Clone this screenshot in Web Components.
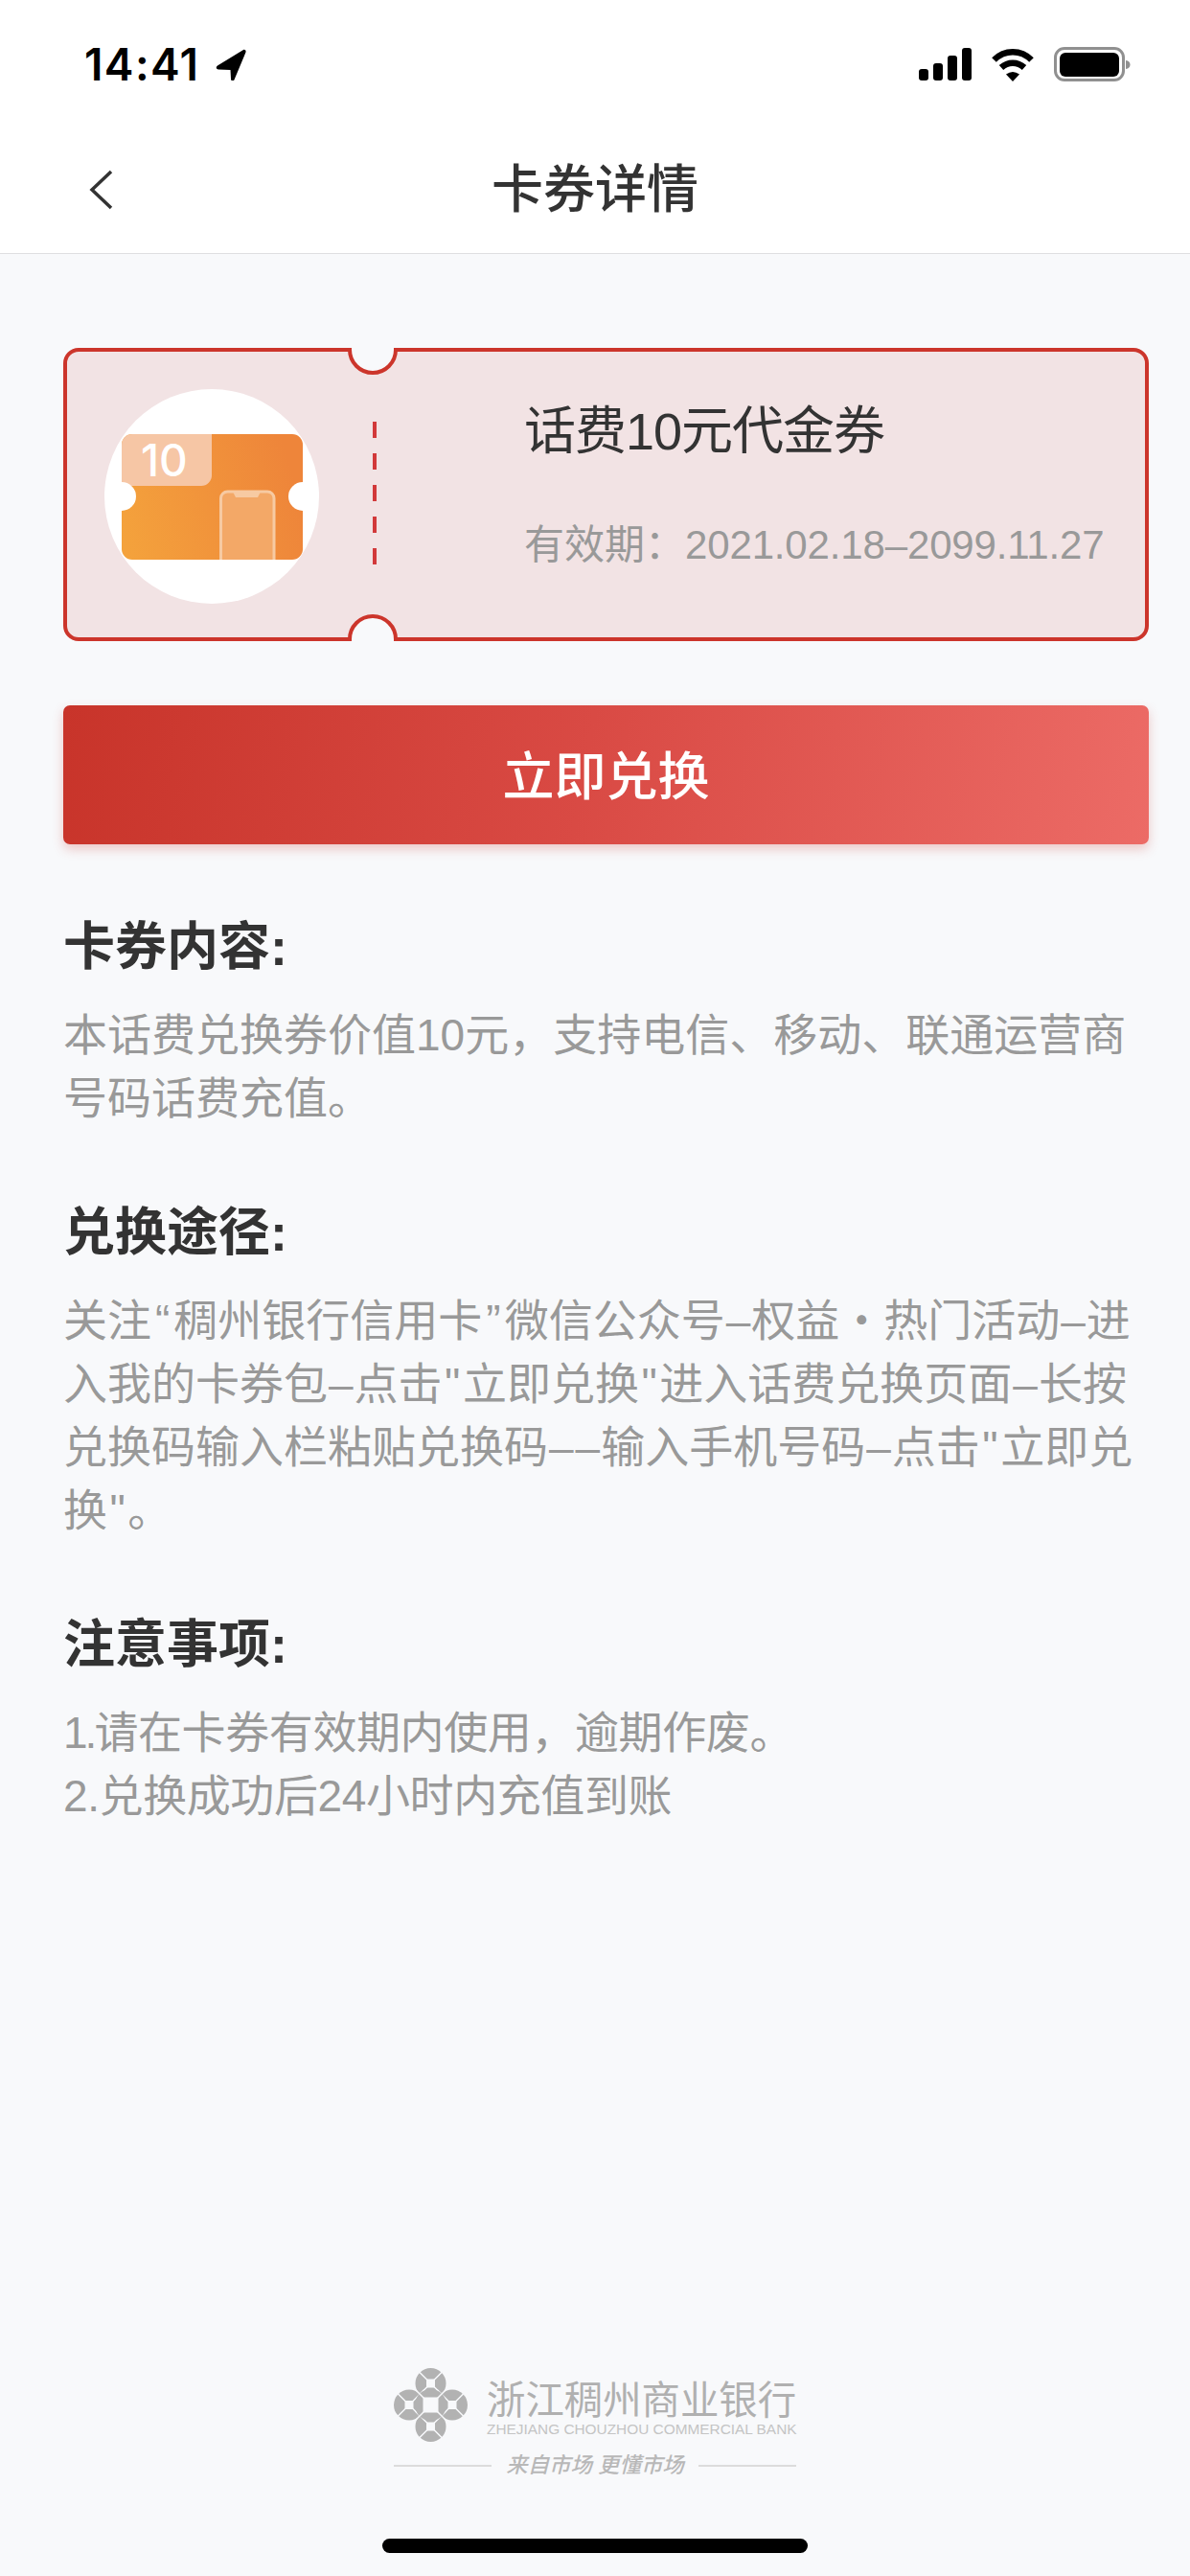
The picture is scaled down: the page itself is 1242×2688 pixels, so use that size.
<!DOCTYPE html>
<html lang="zh-CN">
<head>
<meta charset="utf-8">
<title>卡券详情</title>
<style>
    html, body {
        margin: 0;
        padding: 0;
    }
    body {
        width: 1242px;
        height: 2688px;
        display: flex;
        flex-direction: column;
        background-color: #f8f9fb;
        font-family: "Liberation Sans", "Noto Sans CJK SC", sans-serif;
        overflow: hidden;
    }
    /* punctuation in the copy sits wider than the fallback glyphs */
    .q { padding: 0 4px; }
    .s { padding: 0 2.5px; }
    .d { padding: 0 1px; }
    .n { letter-spacing: -3px; }
    .tight { letter-spacing: -0.4px; }
</style>
</head>
<body>
<status-bar time="14:41"></status-bar>
<nav-header>卡券详情</nav-header>
<coupon-ticket title-text="话费10元代金券" label="有效期：" period="2021.02.18–2099.11.27"></coupon-ticket>
<action-button>立即兑换</action-button>
<info-section heading="卡券内容:">本话费兑换券价值10元，支持电信、移动、联通运营商号码话费充值。</info-section>
<info-section heading="兑换途径:">关注<span class="q">“</span>稠州银行信用卡<span class="q">”</span>微信公众号<span class="d">–</span>权益・热门活动<span class="d">–</span>进<br>入我的卡券包<span class="d">–</span>点击<span class="s">"</span>立即兑换<span class="s">"</span>进入话费兑换页面<span class="d">–</span>长按<br>兑换码输入栏粘贴兑换码<span class="d">–</span><span class="d">–</span>输入手机号码<span class="d">–</span>点击<span class="s">"</span>立即兑<br>换<span class="s">"</span>。</info-section>
<info-section heading="注意事项:"><span class="tight"><span class="n">1.</span>请在卡券有效期内使用，逾期作废。<br>2.兑换成功后24小时内充值到账</span></info-section>
<bank-footer></bank-footer>
<home-indicator></home-indicator>

<script>
class StatusBar extends HTMLElement {
    connectedCallback() {
        this.attachShadow({ mode: 'open' });
        this.shadowRoot.innerHTML = `
            <style>
                :host {
                    display: flex;
                    justify-content: space-between;
                    align-items: flex-start;
                    box-sizing: border-box;
                    height: 132px;
                    padding: 49px 62px 0 88px;
                    background-color: #fff;
                    flex: none;
                }
                .left {
                    display: flex;
                    align-items: center;
                    gap: 16px;
                    height: 36px;
                }
                .time {
                    font-family: Inter, sans-serif;
                    font-size: 46px;
                    font-weight: 600;
                    letter-spacing: 1.4px;
                    line-height: 36px;
                    color: #000;
                }
                .right {
                    display: flex;
                    align-items: center;
                    gap: 20px;
                    height: 36px;
                }
                svg {
                    display: block;
                }
            </style>
            <div class="left">
                <span class="time">${this.getAttribute('time')}</span>
                <svg width="33" height="33" viewBox="0 0 33 33"><path d="M30 1 3 17.5c-2 1.3-1.5 4 1 4l12.5.5.5 9.5c.1 2.3 2.8 2.4 3.6.4L32.5 3.5C33 1.5 31.5.2 30 1Z"/></svg>
            </div>
            <div class="right">
                <svg width="55" height="36" viewBox="0 0 55 36">
                    <rect x="0" y="23" width="10" height="12" rx="3"/>
                    <rect x="15" y="17" width="10" height="18" rx="3"/>
                    <rect x="30" y="9" width="10" height="26" rx="3"/>
                    <rect x="45" y="1" width="10" height="34" rx="3"/>
                </svg>
                <svg width="46" height="36" viewBox="0 0 46 36">
                    <path d="M3.5 13.5C14.5 2.5 31.5 2.5 42.5 13.5" fill="none" stroke="#000" stroke-width="6.5"/>
                    <path d="M11 21.5C18 15 28 15 35 21.5" fill="none" stroke="#000" stroke-width="6.5"/>
                    <path d="M16 28.5Q23 23.5 30 28.5L23 36Z"/>
                </svg>
                <svg width="80" height="36" viewBox="0 0 80 36">
                    <rect x="1.5" y="1.5" width="71" height="33" rx="9.5" fill="none" stroke="#909090" stroke-width="3"/>
                    <rect x="6" y="6" width="62" height="25" rx="6"/>
                    <path d="M75 14c3 .5 4.5 2 4.5 4.5S78 22.5 75 23Z" fill="#909090"/>
                </svg>
            </div>
        `;
    }
}

class NavHeader extends HTMLElement {
    connectedCallback() {
        this.attachShadow({ mode: 'open' });
        this.shadowRoot.innerHTML = `
            <style>
                :host {
                    display: block;
                    position: relative;
                    box-sizing: border-box;
                    height: 133px;
                    background-color: #fff;
                    border-bottom: 1px solid #dfdfe1;
                    flex: none;
                }
                .title {
                    text-align: center;
                    font-size: 54px;
                    font-weight: 500;
                    line-height: 132px;
                    color: #333;
                }
                svg {
                    position: absolute;
                    left: 92px;
                    top: 45px;
                }
            </style>
            <svg width="26" height="42" viewBox="0 0 26 42"><path d="M24 2 4 21l20 19" fill="none" stroke="#333" stroke-width="3.5"/></svg>
            <div class="title"><slot></slot></div>
        `;
    }
}

class CouponTicket extends HTMLElement {
    connectedCallback() {
        this.attachShadow({ mode: 'open' });
        this.shadowRoot.innerHTML = `
            <style>
                :host {
                    display: flex;
                    align-items: stretch;
                    position: relative;
                    box-sizing: border-box;
                    width: 1133px;
                    height: 306px;
                    margin: 98px 0 0 66px;
                    padding-left: 43px;
                    flex: none;
                }
                .shape {
                    position: absolute;
                    left: 0;
                    top: 0;
                }
                .icon {
                    position: relative;
                    align-self: center;
                    width: 224px;
                    height: 224px;
                    margin-top: 4px;
                }
                .icon svg {
                    display: block;
                }
                .dash {
                    position: relative;
                    align-self: center;
                    width: 4px;
                    height: 149px;
                    margin: -4px 0 0 56px;
                    background: repeating-linear-gradient(to bottom, #d2393a 0 17px, transparent 17px 33px);
                }
                .text {
                    position: relative;
                    margin-left: 154px;
                    padding-top: 53px;
                }
                .title {
                    font-size: 54px;
                    line-height: 68px;
                    color: #333;
                    letter-spacing: -1px;
                }
                .period {
                    margin-top: 60px;
                    font-size: 42px;
                    line-height: 50px;
                    color: #999;
                    white-space: nowrap;
                }
                .period span {
                    letter-spacing: -0.15px;
                }
            </style>
            <svg class="shape" width="1133" height="306" viewBox="0 0 1133 306">
                <path d="M16 2H299A24 24 0 0 0 347 2H1117A14 14 0 0 1 1131 16V290A14 14 0 0 1 1117 304H347A24 24 0 0 0 299 304H16A14 14 0 0 1 2 290V16A14 14 0 0 1 16 2Z" fill="#f2e3e4" stroke="#cc352b" stroke-width="4"/>
            </svg>
            <div class="icon">
                <svg width="224" height="224" viewBox="0 0 224 224">
                    <defs>
                        <linearGradient id="coupon" x1="0" y1="0.8" x2="1" y2="0.6">
                            <stop offset="0" stop-color="#f4a23c"/>
                            <stop offset="1" stop-color="#ee853a"/>
                        </linearGradient>
                    </defs>
                    <circle cx="112" cy="112" r="112" fill="#fff"/>
                    <rect x="18" y="47" width="189" height="131" rx="11" fill="url(#coupon)"/>
                    <path d="M18 58a11 11 0 0 1 11-11H112V90a11 11 0 0 1-11 11H18Z" fill="#f6c6a5"/>
                    <text x="38" y="91" font-family="Inter, sans-serif" font-size="46" font-weight="500" fill="#fff">10</text>
                    <path d="M121.5 178V114a7 7 0 0 1 7-7H170a7 7 0 0 1 7 7v64" fill="#f3a867" stroke="#f7caa2" stroke-width="3"/>
                    <path d="M134 107h29l-3 6h-23Z" fill="#f7caa2"/>
                    <circle cx="18" cy="112" r="15" fill="#fff"/>
                    <circle cx="207" cy="112" r="15" fill="#fff"/>
                </svg>
            </div>
            <div class="dash"></div>
            <div class="text">
                <div class="title">${this.getAttribute('title-text')}</div>
                <div class="period">${this.getAttribute('label')}<span>${this.getAttribute('period')}</span></div>
            </div>
        `;
    }
}

class ActionButton extends HTMLElement {
    connectedCallback() {
        this.attachShadow({ mode: 'open' });
        this.shadowRoot.innerHTML = `
            <style>
                :host {
                    display: flex;
                    align-items: center;
                    justify-content: center;
                    box-sizing: border-box;
                    width: 1133px;
                    height: 145px;
                    margin: 67px 0 0 66px;
                    padding-bottom: 5px;
                    border-radius: 7px;
                    background: linear-gradient(100deg, #c8342a 0%, #d94a44 48%, #ec6b66 100%);
                    box-shadow: 0 5px 12px rgba(205, 70, 60, 0.28);
                    color: #fff;
                    font-size: 54px;
                    font-weight: 500;
                    flex: none;
                }
            </style>
            <slot></slot>
        `;
    }
}

class InfoSection extends HTMLElement {
    connectedCallback() {
        this.attachShadow({ mode: 'open' });
        this.shadowRoot.innerHTML = `
            <style>
                :host {
                    display: block;
                    box-sizing: border-box;
                    width: 1242px;
                    padding: 72px 30px 0 66px;
                    flex: none;
                }
                h2 {
                    margin: 0 0 24px;
                    font-size: 54px;
                    font-weight: 700;
                    line-height: 70px;
                    color: #333;
                }
                .body {
                    font-size: 46px;
                    line-height: 66px;
                    color: #999;
                }
            </style>
            <h2>${this.getAttribute('heading')}</h2>
            <div class="body"><slot></slot></div>
        `;
    }
}

class BankFooter extends HTMLElement {
    connectedCallback() {
        this.attachShadow({ mode: 'open' });
        const coin = (x, y, r, h) => `
            <circle cx="${x}" cy="${y}" r="${r}" fill="#b2b2b2"/>
            <path d="M${x - r} ${y - r}L${x + r} ${y + r}M${x + r} ${y - r}L${x - r} ${y + r}" stroke="#f8f9fb" stroke-width="1.5"/>
            <rect x="${x - h}" y="${y - h}" width="${h * 2}" height="${h * 2}" fill="#f8f9fb"/>`;
        this.shadowRoot.innerHTML = `
            <style>
                :host {
                    display: block;
                    width: 420px;
                    margin: auto auto 0;
                    flex: none;
                }
                .brand {
                    display: flex;
                    gap: 20px;
                    height: 77px;
                }
                .brand svg {
                    display: block;
                    flex: none;
                }
                .name {
                    margin-top: 12px;
                    font-size: 40.4px;
                    line-height: 44px;
                    color: #b0b0b0;
                    white-space: nowrap;
                }
                .en {
                    font-size: 15.4px;
                    line-height: 16px;
                    color: #c4c4c4;
                    white-space: nowrap;
                }
                .slogan {
                    display: flex;
                    align-items: center;
                    justify-content: space-between;
                    height: 32px;
                    margin-top: 9px;
                }
                .rule {
                    width: 102px;
                    height: 2px;
                    background-color: #dcdcdc;
                }
                .words {
                    font-size: 22.4px;
                    font-weight: 500;
                    line-height: 32px;
                    color: #b8b8b8;
                    font-style: italic;
                    white-space: nowrap;
                }
            </style>
            <div class="brand">
                <svg width="77" height="77" viewBox="0 0 77 77">
                    ${coin(38.5, 16, 16, 4.5)}
                    ${coin(16, 38.5, 16, 4.5)}
                    ${coin(61, 38.5, 16, 4.5)}
                    ${coin(38.5, 61, 16, 4.5)}
                    ${coin(38.5, 38.5, 16.5, 8)}
                </svg>
                <div>
                    <div class="name">浙江稠州商业银行</div>
                    <div class="en">ZHEJIANG CHOUZHOU COMMERCIAL BANK</div>
                </div>
            </div>
            <div class="slogan">
                <span class="rule"></span>
                <span class="words">来自市场 更懂市场</span>
                <span class="rule"></span>
            </div>
        `;
    }
}

class HomeIndicator extends HTMLElement {
    connectedCallback() {
        this.attachShadow({ mode: 'open' });
        this.shadowRoot.innerHTML = `
            <style>
                :host {
                    display: block;
                    width: 444px;
                    height: 15px;
                    margin: 60px 0 24px 399px;
                    border-radius: 8px;
                    background-color: #000;
                    flex: none;
                }
            </style>
        `;
    }
}

customElements.define('status-bar', StatusBar);
customElements.define('nav-header', NavHeader);
customElements.define('coupon-ticket', CouponTicket);
customElements.define('action-button', ActionButton);
customElements.define('info-section', InfoSection);
customElements.define('bank-footer', BankFooter);
customElements.define('home-indicator', HomeIndicator);
</script>
</body>
</html>
